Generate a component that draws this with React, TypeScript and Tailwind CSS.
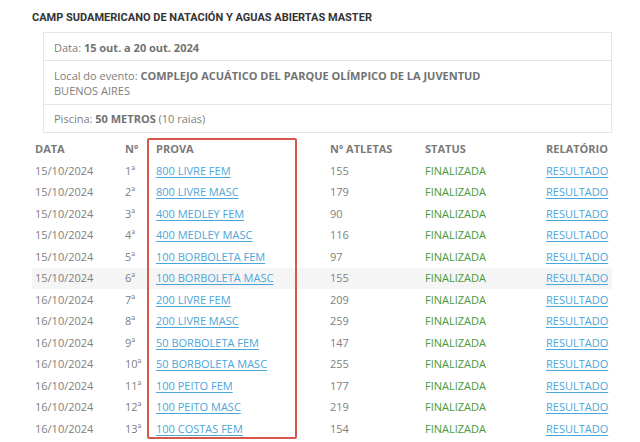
import React from "react";

const rows: [string, string, string, string][] = [
  ["15/10/2024", "1ª", "800 LIVRE FEM", "155"],
  ["15/10/2024", "2ª", "800 LIVRE MASC", "179"],
  ["15/10/2024", "3ª", "400 MEDLEY FEM", "90"],
  ["15/10/2024", "4ª", "400 MEDLEY MASC", "116"],
  ["15/10/2024", "5ª", "100 BORBOLETA FEM", "97"],
  ["15/10/2024", "6ª", "100 BORBOLETA MASC", "155"],
  ["16/10/2024", "7ª", "200 LIVRE FEM", "209"],
  ["16/10/2024", "8ª", "200 LIVRE MASC", "259"],
  ["16/10/2024", "9ª", "50 BORBOLETA FEM", "147"],
  ["16/10/2024", "10ª", "50 BORBOLETA MASC", "255"],
  ["16/10/2024", "11ª", "100 PEITO FEM", "177"],
  ["16/10/2024", "12ª", "100 PEITO MASC", "219"],
  ["16/10/2024", "13ª", "100 COSTAS FEM", "154"],
];

export default function App() {
  return (
    <div
      className="relative w-[640px] h-[442px] overflow-hidden bg-white"
      style={{ fontFamily: '"Open Sans", sans-serif' }}
    >
      <div className="pl-[32px] pr-[28px] pt-[11px]">
        <h1
          className="text-[11px] font-bold text-[#333] leading-[14px]"
          style={{ fontFamily: "Roboto, sans-serif" }}
        >
          CAMP SUDAMERICANO DE NATACIÓN Y AGUAS ABIERTAS MASTER
        </h1>
        <div className="ml-[11px] mt-[7px] border border-[#e6e6e6] text-[11px] text-[#808080] leading-[15px]">
          <div className="px-[10px] pt-[7px] pb-[5px]">
            Data: <b className="font-bold text-[#727272]">15 out. a 20 out. 2024</b>
          </div>
          <div className="px-[10px] pt-[7px] pb-[6px] border-t border-[#e6e6e6]">
            Local do evento:{" "}
            <b className="font-bold text-[#727272]">
              COMPLEJO ACUÁTICO DEL PARQUE OLÍMPICO DE LA JUVENTUD
            </b>
            <br />
            BUENOS AIRES
          </div>
          <div className="px-[10px] pt-[6px] pb-[6px] border-t border-[#e6e6e6]">
            Piscina: <b className="font-bold text-[#727272]">50 METROS</b> (10 raias)
          </div>
        </div>
        <div className="mt-[5px] text-[11px] text-[#808080]">
          <div className="grid grid-cols-[90px_31px_174px_95px_121px_69px] h-[22px] items-center font-bold text-[#7a7a7a]">
            <div className="px-[3px]">DATA</div>
            <div className="px-[3px]">Nº</div>
            <div className="px-[3px]">PROVA</div>
            <div className="px-[3px]">Nº ATLETAS</div>
            <div className="px-[3px]">STATUS</div>
            <div className="px-[3px]">RELATÓRIO</div>
          </div>
          {rows.map((r, i) => (
            <div
              key={i}
              className={
                "grid grid-cols-[90px_31px_174px_95px_121px_69px] h-[21.5px] items-center " +
                (i === 5 ? "bg-[#f5f5f5]" : "")
              }
            >
              <div className="px-[3px]">{r[0]}</div>
              <div className="px-[3px]">{r[1]}</div>
              <div className="px-[3px]">
                <a className="text-[#4ba6d9] underline underline-offset-[2px]">{r[2]}</a>
              </div>
              <div className="px-[3px]">{r[3]}</div>
              <div className="px-[3px] text-[#4a9a3c]">FINALIZADA</div>
              <div className="px-[3px]">
                <a className="text-[#4ba6d9] underline underline-offset-[2px]">RESULTADO</a>
              </div>
            </div>
          ))}
        </div>
      </div>
      <div className="absolute left-[147px] top-[138px] w-[150px] h-[301px] border-2 border-[#d9564a] rounded-[2px]" />
    </div>
  );
}
